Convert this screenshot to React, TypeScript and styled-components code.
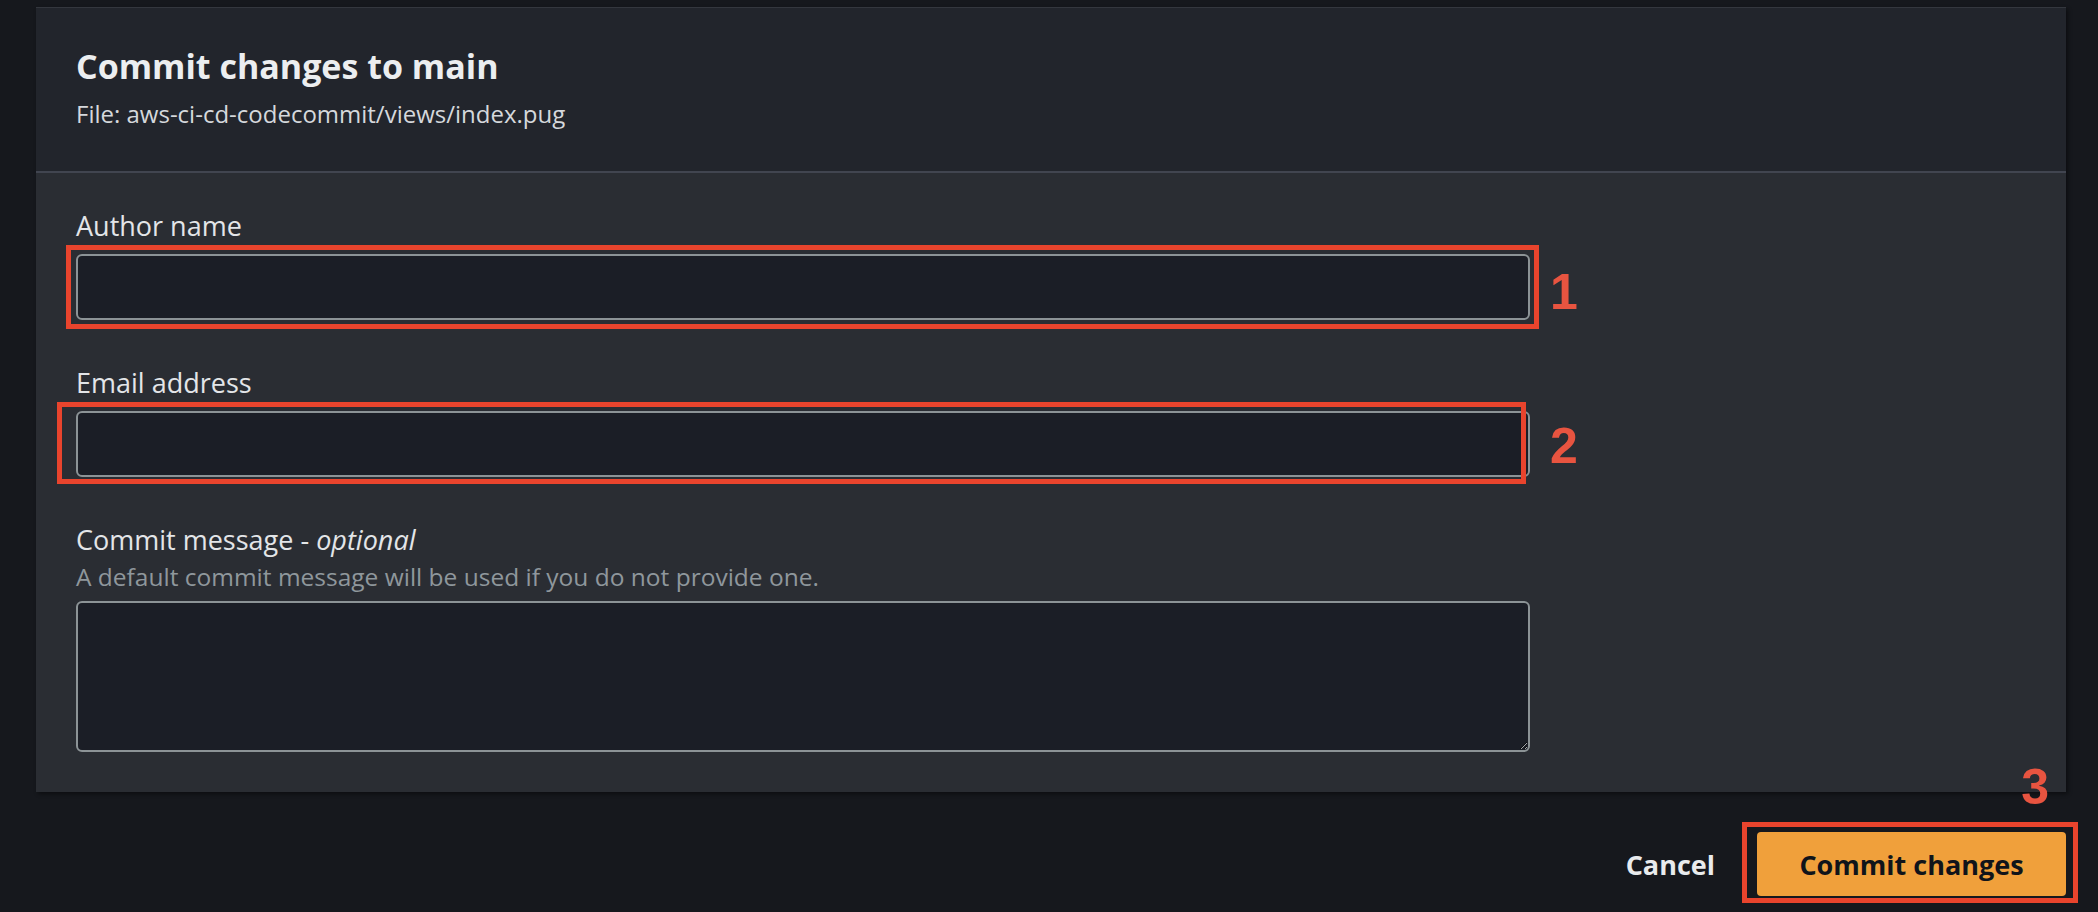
import * as React from "react";
import styled, { createGlobalStyle } from "styled-components";

const GlobalStyle = createGlobalStyle`
    html, body {
        margin: 0;
        padding: 0;
        background: #16181d;
    }
    body {
        font-family: "Open Sans", "Noto Sans", sans-serif;
        color: #e9ebed;
    }
`;

const Page = styled.div`
    display: flex;
    flex-direction: column;
    padding: 7px 32px 0 36px;
    height: 912px;
    box-sizing: border-box;
`;

const Panel = styled.div`
    background: #2a2d33;
    border-top: 1px solid #34373e;
    box-shadow: 2px 2px 4px rgba(0, 0, 0, 0.45);
`;

const Header = styled.div`
    background: #22252c;
    padding: 38px 40px 42px;
    border-bottom: 2px solid #414550;
`;

const Title = styled.h2`
    margin: 0;
    font-size: 34px;
    line-height: 41px;
    font-weight: 700;
    color: #eceef0;
`;

const Subtitle = styled.div`
    margin-top: 12px;
    font-size: 24px;
    line-height: 30px;
    color: #d5d8dc;
`;

const Body = styled.div`
    display: flex;
    flex-direction: column;
    gap: 45px;
    padding: 35px 40px 40px;
`;

const Field = styled.div`
    display: flex;
    flex-direction: column;
`;

const Label = styled.label`
    font-size: 27px;
    line-height: 35px;
    color: #e3e5e8;
    margin-bottom: 11px;
`;

const LabelWithHint = styled(Label)`
    margin-bottom: 5px;
`;

const Optional = styled.i`
    font-style: italic;
`;

const Hint = styled.div`
    font-size: 24.5px;
    line-height: 30px;
    color: #8f979c;
    margin-bottom: 9px;
`;

const Control = styled.div`
    position: relative;
    width: 1454px;
`;

const TextInput = styled.input`
    display: block;
    box-sizing: border-box;
    width: 100%;
    height: 66px;
    background: #1b1e26;
    border: 2px solid #8c9396;
    border-radius: 6px;
    outline: none;
    color: #e9ebed;
    font: inherit;
    font-size: 27px;
    padding: 0 18px;
`;

const TextArea = styled.textarea`
    display: block;
    box-sizing: border-box;
    width: 100%;
    height: 151px;
    background: #1b1e26;
    border: 2px solid #8c9396;
    border-radius: 6px;
    outline: none;
    color: #e9ebed;
    font: inherit;
    font-size: 27px;
    padding: 10px 18px;
    resize: vertical;
`;

// red annotation frames drawn over the screenshot
const Marker = styled.div<{ $t: number; $l: number; $r: number; $b: number }>`
    position: absolute;
    top: ${(p) => p.$t}px;
    left: ${(p) => p.$l}px;
    right: ${(p) => p.$r}px;
    bottom: ${(p) => p.$b}px;
    border: 5px solid #e9442d;
    pointer-events: none;
`;

const Step = styled.span<{ $t: number; $l?: number; $r?: number }>`
    position: absolute;
    top: ${(p) => p.$t}px;
    ${(p) => (p.$l !== undefined ? `left: ${p.$l}px;` : "")}
    ${(p) => (p.$r !== undefined ? `right: ${p.$r}px;` : "")}
    font-family: "Liberation Sans", Arial, sans-serif;
    font-weight: 700;
    font-size: 50px;
    line-height: 50px;
    color: #e85440;
`;

const Footer = styled.div`
    display: flex;
    justify-content: flex-end;
    align-items: center;
    gap: 20px;
    margin-top: 40px;
`;

const LinkButton = styled.button`
    background: none;
    border: none;
    padding: 0 22px;
    font-family: "Open Sans", sans-serif;
    font-size: 27px;
    font-weight: 700;
    color: #e9ebed;
    cursor: pointer;
`;

const PrimaryWrap = styled.div`
    position: relative;
`;

const PrimaryButton = styled.button`
    display: block;
    width: 309px;
    height: 64px;
    background: #f0a03b;
    border: none;
    border-radius: 4px;
    font-family: "Open Sans", sans-serif;
    font-size: 27px;
    font-weight: 700;
    color: #10141a;
    cursor: pointer;
`;

export default function App() {
    return (
        <>
            <GlobalStyle />
            <Page>
                <Panel>
                    <Header>
                        <Title>Commit changes to main</Title>
                        <Subtitle>File: aws-ci-cd-codecommit/views/index.pug</Subtitle>
                    </Header>
                    <Body>
                        <Field>
                            <Label>Author name</Label>
                            <Control>
                                <TextInput />
                                <Marker $t={-9} $l={-10} $r={-9} $b={-9} />
                                <Step $t={13} $l={1474}>1</Step>
                            </Control>
                        </Field>
                        <Field>
                            <Label>Email address</Label>
                            <Control>
                                <TextInput />
                                <Marker $t={-9} $l={-19} $r={4} $b={-7} />
                                <Step $t={10} $l={1474}>2</Step>
                            </Control>
                        </Field>
                        <Field>
                            <LabelWithHint>
                                Commit message - <Optional>optional</Optional>
                            </LabelWithHint>
                            <Hint>A default commit message will be used if you do not provide one.</Hint>
                            <Control>
                                <TextArea />
                            </Control>
                        </Field>
                    </Body>
                </Panel>
                <Footer>
                    <LinkButton>Cancel</LinkButton>
                    <PrimaryWrap>
                        <PrimaryButton>Commit changes</PrimaryButton>
                        <Marker $t={-10} $l={-15} $r={-12} $b={-7} />
                        <Step $t={-70} $r={17}>3</Step>
                    </PrimaryWrap>
                </Footer>
            </Page>
        </>
    );
}
